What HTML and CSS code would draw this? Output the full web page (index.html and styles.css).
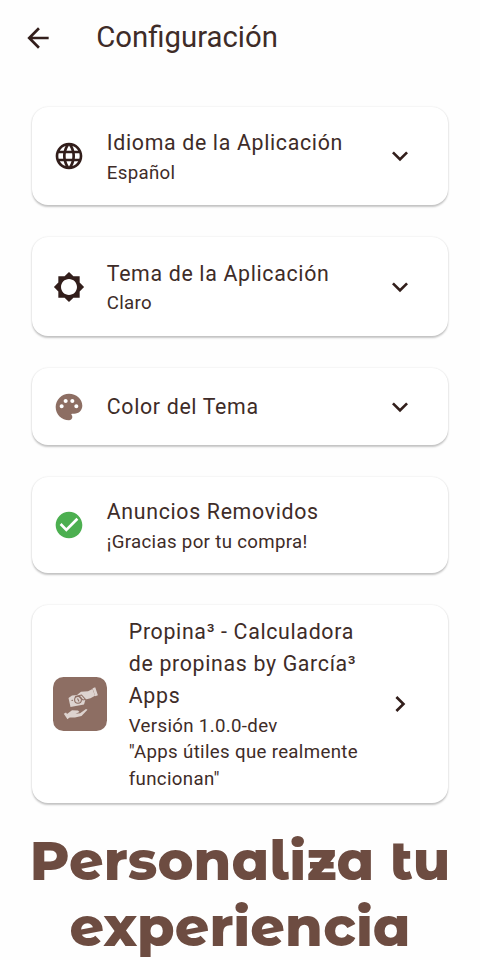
FILE: index.html
```html
<!DOCTYPE html>
<html lang="es">
<head>
<meta charset="utf-8">
<title>Configuración</title>
<link rel="stylesheet" href="styles.css">
</head>
<body>
<header class="bar">
  <svg class="icon" viewBox="0 0 24 24"><path d="M20 11H7.83l5.59-5.59L12 4l-8 8 8 8 1.41-1.41L7.83 13H20z"/></svg>
  <h1>Configuración</h1>
</header>
<main class="cards">
  <section class="card two">
    <svg class="icon" viewBox="0 0 24 24"><path d="M11.99 2C6.47 2 2 6.48 2 12s4.47 10 9.99 10C17.52 22 22 17.52 22 12S17.52 2 11.99 2zm6.93 6h-2.95c-.32-1.25-.78-2.45-1.38-3.56 1.84.63 3.37 1.91 4.33 3.56zM12 4.04c.83 1.2 1.48 2.53 1.91 3.96h-3.82c.43-1.43 1.08-2.76 1.91-3.96zM4.26 14C4.1 13.36 4 12.69 4 12s.1-1.36.26-2h3.38c-.08.66-.14 1.32-.14 2s.06 1.34.14 2H4.26zm.82 2h2.95c.32 1.25.78 2.45 1.38 3.56-1.84-.63-3.37-1.9-4.33-3.56zm2.95-8H5.08c.96-1.66 2.49-2.93 4.33-3.56C8.81 5.55 8.35 6.75 8.03 8zM12 19.96c-.83-1.2-1.48-2.53-1.91-3.96h3.82c-.43 1.43-1.08 2.76-1.91 3.96zM14.34 14H9.66c-.09-.66-.16-1.32-.16-2s.07-1.35.16-2h4.68c.09.65.16 1.32.16 2s-.07 1.34-.16 2zm.25 5.56c.6-1.11 1.06-2.31 1.38-3.56h2.95c-.96 1.65-2.49 2.93-4.33 3.56zM16.36 14c.08-.66.14-1.32.14-2s-.06-1.34-.14-2h3.38c.16.64.26 1.31.26 2s-.1 1.36-.26 2h-3.38z"/></svg>
    <div class="text"><h2>Idioma de la Aplicación</h2><p>Español</p></div>
    <svg class="icon chevron" viewBox="0 0 24 24"><path d="M7.41 8.59 12 13.17l4.59-4.58L18 10l-6 6-6-6z"/></svg>
  </section>
  <section class="card two">
    <svg class="icon" viewBox="0 0 24 24"><path d="M20 15.31 23.31 12 20 8.69V4h-4.69L12 .69 8.69 4H4v4.69L.69 12 4 15.31V20h4.69L12 23.31 15.31 20H20v-4.69zM12 18c-3.31 0-6-2.69-6-6s2.69-6 6-6 6 2.69 6 6-2.69 6-6 6z"/></svg>
    <div class="text"><h2>Tema de la Aplicación</h2><p>Claro</p></div>
    <svg class="icon chevron" viewBox="0 0 24 24"><path d="M7.41 8.59 12 13.17l4.59-4.58L18 10l-6 6-6-6z"/></svg>
  </section>
  <section class="card single">
    <svg class="icon palette" viewBox="0 0 24 24"><path d="M12 2C6.49 2 2 6.49 2 12s4.49 10 10 10c1.38 0 2.5-1.12 2.5-2.5 0-.61-.23-1.2-.64-1.67-.08-.1-.13-.21-.13-.33 0-.28.22-.5.5-.5H16c3.31 0 6-2.69 6-6 0-4.96-4.49-9-10-9zM6.5 13C5.67 13 5 12.33 5 11.5S5.67 10 6.5 10 8 10.67 8 11.5 7.33 13 6.5 13zm3-4C8.67 9 8 8.33 8 7.5S8.67 6 9.5 6s1.5.67 1.5 1.5S10.33 9 9.5 9zm5 0c-.83 0-1.5-.67-1.5-1.5S13.67 6 14.5 6s1.5.67 1.5 1.5S15.33 9 14.5 9zm3 4c-.83 0-1.5-.67-1.5-1.5s.67-1.5 1.5-1.5 1.5.67 1.5 1.5-.67 1.5-1.5 1.5z"/></svg>
    <div class="text"><h2>Color del Tema</h2></div>
    <svg class="icon chevron" viewBox="0 0 24 24"><path d="M7.41 8.59 12 13.17l4.59-4.58L18 10l-6 6-6-6z"/></svg>
  </section>
  <section class="card ads">
    <svg class="icon check" viewBox="0 0 24 24"><path d="M12 2C6.48 2 2 6.48 2 12s4.48 10 10 10 10-4.48 10-10S17.52 2 12 2zm-2 15-5-5 1.41-1.41L10 14.17l7.59-7.59L19 8l-9 9z"/></svg>
    <div class="text"><h2>Anuncios Removidos</h2><p>¡Gracias por tu compra!</p></div>
  </section>
  <section class="card about">
    <svg class="logo" viewBox="0 0 54 54">
      <rect width="54" height="54" rx="10.5" fill="#8d6e63"/>
      <g fill="#ddd3cf">
        <path d="M19 18.5 24 18l4-3.2 7-.6 4.5-2.2 2.5 6.8-4.5 2.5-5 1.2-1.5 5-13.500 2.500-2-9z"/>
        <path d="m39.500 11.300 2.700-1 2.700 8-2.700 1z"/>
        <path d="m14 37 5-3.800 6 .3 1.500 1.500-4 1.700 4.500-.4 6-4.300 1.500.7-6 6.300-6.500 1.500-5.500.1-2.500 1.600z"/>
        <path d="m10.800 36.800 2.200-1.200 3.500 5-2.200 1.400z"/>
      </g>
      <g fill="none" stroke="#8d6e63" stroke-width="1.1">
        <circle cx="25" cy="22.8" r="3.4"/>
        <path d="m22 19.500 6.500-1.500 4 4.500-2.500.5-3.500-3M24.500 21.500l1.500 3M18.500 23.500l1.500-.3"/>
      </g>
    </svg>
    <div class="text"><h2>Propina³ - Calculadora<br>de propinas by García³<br>Apps</h2><p>Versión 1.0.0-dev<br>"Apps útiles que realmente<br>funcionan"</p></div>
    <svg class="icon chevron" viewBox="0 0 24 24"><path d="M10 6 8.59 7.41 13.17 12l-4.58 4.59L10 18l6-6z"/></svg>
  </section>
</main>
<footer class="tagline">
  <div>Personaliza tu</div>
  <div>experiencia</div>
</footer>
</body>
</html>
```
FILE: styles.css
```css
* { box-sizing: border-box; }
body {
  margin: 0;
  width: 480px;
  height: 960px;
  overflow: hidden;
  background: #fefefe;
  color: #3e2c28;
  font-family: Roboto, sans-serif;
}
h1, h2, p { margin: 0; font-weight: 400; }
.bar {
  height: 75px;
  display: flex;
  align-items: center;
  padding-left: 21.6px;
  gap: 42.7px;
}
.bar h1 { font-size: 29.33px; line-height: 37px; margin-top: -1px; }
.icon { width: 32px; height: 32px; flex: none; fill: #321e1b; }
.cards {
  padding: 31.8px 32px 0;
  display: flex;
  flex-direction: column;
  gap: 32px;
}
.card {
  display: flex;
  align-items: center;
  padding: 0 32px 0 21.4px;
  border-radius: 16px;
  background: #fff;
  box-shadow: 0 1.3px 2px rgba(0, 0, 0, .22), 0 0 2px rgba(0, 0, 0, .08);
}
.two { height: 98.6px; }
.single { height: 77.4px; }
.ads { height: 96px; }
.about { height: 197.4px; }
.text { flex: 1; margin-left: 21.4px; padding-top: 1px; white-space: nowrap; }
.text h2 { font-size: 21.33px; line-height: 32px; letter-spacing: .667px; }
.text p { padding-top: .5px; font-size: 18.67px; line-height: 26.67px; letter-spacing: .33px; }
.single .text { padding-top: 0; }
.palette { fill: #8d6e63; }
.check { fill: #4caf50; }
.logo { width: 54px; height: 54px; flex: none; }
.tagline {
  margin-top: 25.2px;
  color: #6d4c41;
  font-family: "Montserrat Alternates", Montserrat, Inter, sans-serif;
  font-size: 54.2px;
  font-weight: 800;
  line-height: 66px;
  text-align: center;
  white-space: nowrap;
}
```
